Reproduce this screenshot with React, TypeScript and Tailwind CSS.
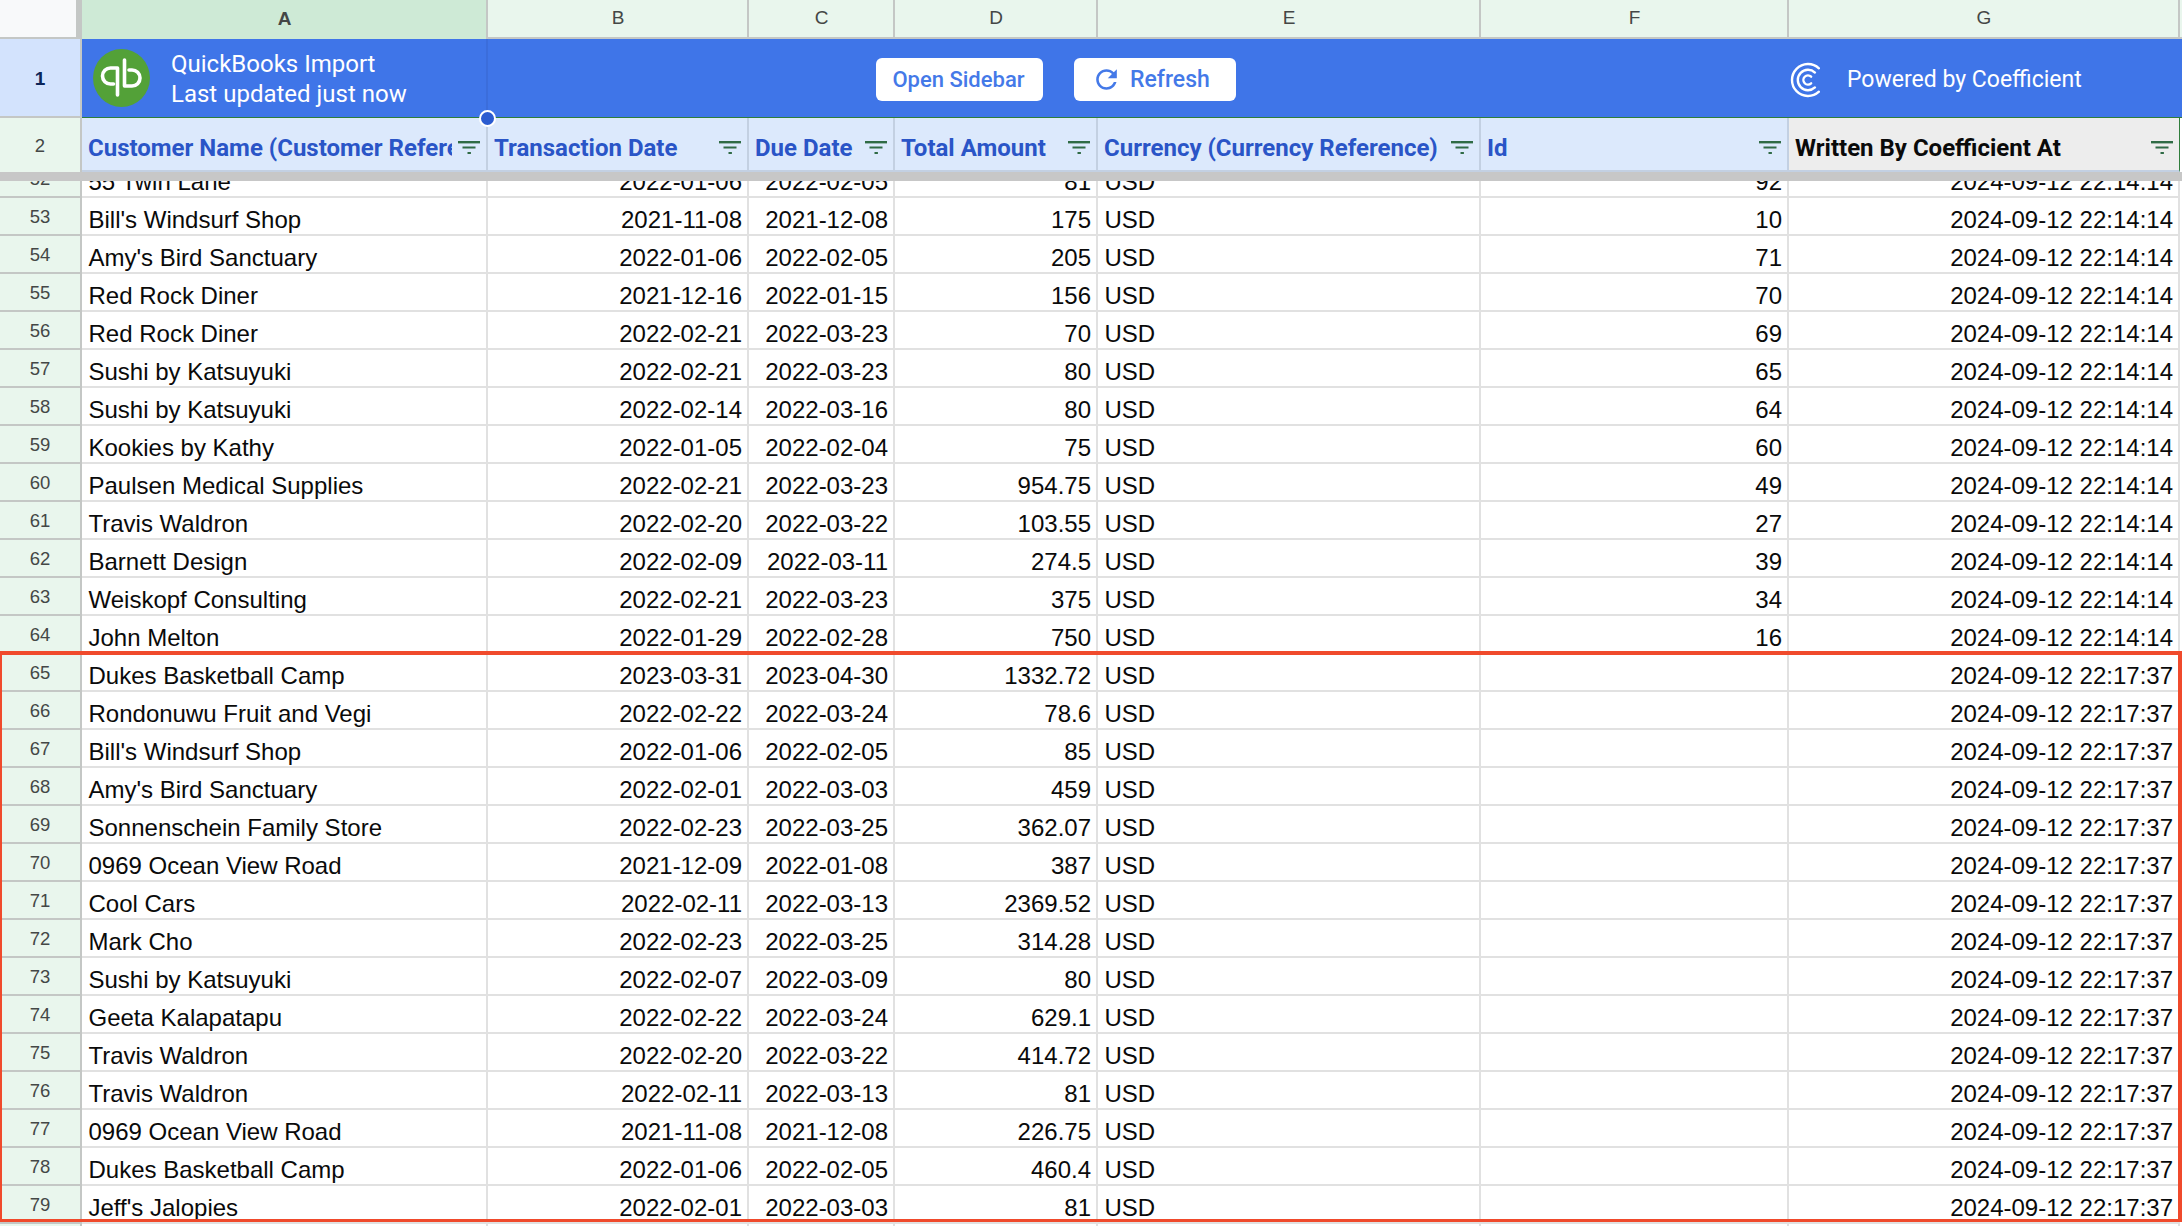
const COLS = "grid grid-cols-[82px_406px_261px_146px_203px_383px_308px_391px_2px]";

const T1 = "2024-09-12 22:14:14";
const T2 = "2024-09-12 22:17:37";

type Row = [number, string, string, string, string, string, string];

const rows: Row[] = [
  [52, "55 Twin Lane", "2022-01-06", "2022-02-05", "81", "92", T1],
  [53, "Bill's Windsurf Shop", "2021-11-08", "2021-12-08", "175", "10", T1],
  [54, "Amy's Bird Sanctuary", "2022-01-06", "2022-02-05", "205", "71", T1],
  [55, "Red Rock Diner", "2021-12-16", "2022-01-15", "156", "70", T1],
  [56, "Red Rock Diner", "2022-02-21", "2022-03-23", "70", "69", T1],
  [57, "Sushi by Katsuyuki", "2022-02-21", "2022-03-23", "80", "65", T1],
  [58, "Sushi by Katsuyuki", "2022-02-14", "2022-03-16", "80", "64", T1],
  [59, "Kookies by Kathy", "2022-01-05", "2022-02-04", "75", "60", T1],
  [60, "Paulsen Medical Supplies", "2022-02-21", "2022-03-23", "954.75", "49", T1],
  [61, "Travis Waldron", "2022-02-20", "2022-03-22", "103.55", "27", T1],
  [62, "Barnett Design", "2022-02-09", "2022-03-11", "274.5", "39", T1],
  [63, "Weiskopf Consulting", "2022-02-21", "2022-03-23", "375", "34", T1],
  [64, "John Melton", "2022-01-29", "2022-02-28", "750", "16", T1],
  [65, "Dukes Basketball Camp", "2023-03-31", "2023-04-30", "1332.72", "", T2],
  [66, "Rondonuwu Fruit and Vegi", "2022-02-22", "2022-03-24", "78.6", "", T2],
  [67, "Bill's Windsurf Shop", "2022-01-06", "2022-02-05", "85", "", T2],
  [68, "Amy's Bird Sanctuary", "2022-02-01", "2022-03-03", "459", "", T2],
  [69, "Sonnenschein Family Store", "2022-02-23", "2022-03-25", "362.07", "", T2],
  [70, "0969 Ocean View Road", "2021-12-09", "2022-01-08", "387", "", T2],
  [71, "Cool Cars", "2022-02-11", "2022-03-13", "2369.52", "", T2],
  [72, "Mark Cho", "2022-02-23", "2022-03-25", "314.28", "", T2],
  [73, "Sushi by Katsuyuki", "2022-02-07", "2022-03-09", "80", "", T2],
  [74, "Geeta Kalapatapu", "2022-02-22", "2022-03-24", "629.1", "", T2],
  [75, "Travis Waldron", "2022-02-20", "2022-03-22", "414.72", "", T2],
  [76, "Travis Waldron", "2022-02-11", "2022-03-13", "81", "", T2],
  [77, "0969 Ocean View Road", "2021-11-08", "2021-12-08", "226.75", "", T2],
  [78, "Dukes Basketball Camp", "2022-01-06", "2022-02-05", "460.4", "", T2],
  [79, "Jeff's Jalopies", "2022-02-01", "2022-03-03", "81", "", T2],
  [80, "", "", "", "", "", ""],
];

function FilterIcon() {
  return (
    <svg width="22" height="13" viewBox="0 0 22 13" className="shrink-0">
      <rect x="0" y="0" width="22" height="2.4" fill="#2f6b45" />
      <rect x="4.5" y="5.5" width="13" height="2" fill="#2f6b45" />
      <rect x="9.5" y="11" width="3.4" height="2" fill="#2f6b45" />
    </svg>
  );
}

function QbLogo() {
  return (
    <svg width="57" height="58" viewBox="0 0 57 58" className="shrink-0">
      <ellipse cx="28.5" cy="29" rx="28.5" ry="29" fill="#53a138" />
      <path
        d="M24.5 19 H17.5 a8 8 0 0 0 0 16 H20.5 M24.5 19 V46"
        fill="none"
        stroke="#fff"
        strokeWidth="3.6"
        strokeLinecap="round"
        strokeLinejoin="round"
      />
      <path
        d="M31.5 37 H39 a8 8 0 0 0 0 -16 H36 M31.5 37 V11"
        fill="none"
        stroke="#fff"
        strokeWidth="3.6"
        strokeLinecap="round"
        strokeLinejoin="round"
      />
    </svg>
  );
}

function RefreshIcon() {
  return (
    <svg width="31" height="31" viewBox="0 0 24 24" fill="currentColor" className="shrink-0">
      <path d="M17.65 6.35C16.2 4.9 14.21 4 12 4c-4.42 0-7.99 3.58-7.99 8s3.57 8 7.99 8c3.73 0 6.84-2.55 7.73-6h-2.08c-.82 2.33-3.04 4-5.65 4-3.31 0-6-2.69-6-6s2.69-6 6-6c1.66 0 3.14.69 4.22 1.78L13 11h7V4l-2.35 2.35z" />
    </svg>
  );
}

function arc(r: number) {
  const a = (47 * Math.PI) / 180;
  const cx = 18;
  const cy = 18;
  const dx = r * Math.cos(a);
  const dy = r * Math.sin(a);
  return `M${cx + dx} ${cy - dy} A${r} ${r} 0 1 0 ${cx + dx} ${cy + dy}`;
}

function CoefficientLogo() {
  return (
    <svg width="30" height="36" viewBox="0 0 30 36" className="shrink-0">
      {[16, 10.2, 4.6].map((r) => (
        <path key={r} d={arc(r)} fill="none" stroke="#fff" strokeWidth="2.4" strokeLinecap="round" />
      ))}
    </svg>
  );
}

function ColHead({ label, active }: { label: string; active?: boolean }) {
  return (
    <div
      className={
        "flex items-center justify-center pl-[1px] font-['Liberation_Sans',sans-serif] text-[19px] text-[#444746] " +
        (active
          ? "border-r-2 border-[#c4c7c5] bg-[#ceead6] font-bold"
          : "border-r-2 border-b-2 border-[#c4c7c5] bg-[#e9f6ed]")
      }
    >
      {label}
    </div>
  );
}

function FieldHead({ label, gray }: { label: string; gray?: boolean }) {
  return (
    <div
      className={
        "flex items-center gap-[6px] border-b-2 border-[#c3d0e2] pt-[7px] pr-[6px] pl-[6px] font-['Roboto',sans-serif] text-[24px] font-bold " +
        (gray
          ? "border-r border-r-[#2f7d3b] bg-[#ededed] text-[#0a0a0a]"
          : "border-r-2 bg-[#dce9fc] text-[#2a55c7]")
      }
    >
      <span className="min-w-0 flex-1 overflow-hidden whitespace-nowrap">{label}</span>
      <FilterIcon />
    </div>
  );
}

function Cell({ children, right }: { children?: string; right?: boolean }) {
  return (
    <div
      className={
        "flex items-end overflow-hidden border-r-2 border-b-2 border-[#e1e1e1] pr-[5px] pl-[6.5px] whitespace-nowrap " +
        (right ? "justify-end" : "")
      }
    >
      <span className="leading-[28px]">{children}</span>
    </div>
  );
}

export default function App() {
  return (
    <div className="relative h-[1226px] w-[2182px] overflow-hidden bg-white font-['Liberation_Sans',sans-serif]">
      <div className={COLS + " h-[39px]"}>
        <div className="border-r-[6px] border-b-2 border-[#c4c7c5] bg-[#f8f9fa]" />
        <ColHead label="A" active />
        <ColHead label="B" />
        <ColHead label="C" />
        <ColHead label="D" />
        <ColHead label="E" />
        <ColHead label="F" />
        <ColHead label="G" />
        <div className="border-b-2 border-[#c4c7c5] bg-[#e9f6ed]" />
      </div>

      <div className="flex h-[79px]">
        <div className="flex w-[82px] shrink-0 items-center justify-center border-r-2 border-b-2 border-[#c4c7c5] bg-[#d3e3fd] pt-[3px] text-[19px] font-bold text-[#0b2559]">
          1
        </div>
        <div className="flex min-w-0 flex-1 items-center border-b border-[#2f7d3b] bg-[#3f75e8] font-['Roboto',sans-serif] text-white">
          <div className="flex h-full w-[406px] shrink-0 items-center gap-[21px] border-r-2 border-[#3b6ddb] pl-[11px]">
            <QbLogo />
            <div className="pt-[3px] text-[24px] leading-[29.5px]">
              <div>QuickBooks Import</div>
              <div>Last updated just now</div>
            </div>
          </div>
          <div className="ml-[388px] flex items-center gap-[31px] pt-[2px] text-[#4479e8]">
            <button className="flex h-[43px] w-[167px] shrink-0 items-center justify-center rounded-[6px] bg-white pt-[1px] pr-[2px] text-[22px] font-medium">
              Open Sidebar
            </button>
            <button className="flex h-[43px] w-[162px] shrink-0 items-center gap-[8px] rounded-[6px] bg-white pl-[17px] text-[23px] font-medium">
              <RefreshIcon />
              <span className="pt-[2px]">Refresh</span>
            </button>
          </div>
          <div className="ml-[554px] flex items-center gap-[27px] pt-[3px] text-[23px]">
            <CoefficientLogo />
            <span className="pt-[1px]">Powered by Coefficient</span>
          </div>
        </div>
      </div>

      <div className={COLS + " h-[54px]"}>
        <div className="flex items-center justify-center border-r-2 border-[#c4c7c5] bg-[#e9f6ed] pt-[2px] text-[18.5px] text-[#444746]">
          2
        </div>
        <FieldHead label="Customer Name (Customer Reference)" />
        <FieldHead label="Transaction Date" />
        <FieldHead label="Due Date" />
        <FieldHead label="Total Amount" />
        <FieldHead label="Currency (Currency Reference)" />
        <FieldHead label="Id" />
        <FieldHead label="Written By Coefficient At" gray />
        <div className="bg-white" />
      </div>

      <div className="h-[9px] bg-[#c7c7c7]" />

      <div className="h-[1045px] overflow-hidden text-[24px] text-[#0a0a0a]">
        <div className="-mt-[21px]">
          {rows.map((r) => (
            <div key={r[0]} className={COLS + " h-[38px]"}>
              <div className="flex items-center justify-center border-r-2 border-b-2 border-[#c4c7c5] bg-[#e9f6ed] pt-[1px] text-[18.5px] text-[#444746]">
                {r[0]}
              </div>
              <Cell>{r[1]}</Cell>
              <Cell right>{r[2]}</Cell>
              <Cell right>{r[3]}</Cell>
              <Cell right>{r[4]}</Cell>
              <Cell>{r[1] ? "USD" : ""}</Cell>
              <Cell right>{r[5]}</Cell>
              <Cell right>{r[6]}</Cell>
              <div />
            </div>
          ))}
        </div>
      </div>

      <div className="pointer-events-none absolute top-[651px] left-0 h-[571px] w-[2182px] border-t-4 border-r-4 border-b-[3px] border-l-2 border-[#f04a2c]" />
      <div className="absolute top-[110px] left-[479px] h-[17px] w-[17px] rounded-full border-2 border-white bg-[#2a5bd0]" />
    </div>
  );
}
